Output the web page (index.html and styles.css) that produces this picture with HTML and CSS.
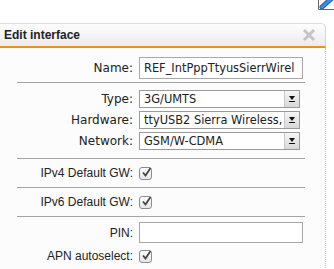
FILE: index.html
```html
<!DOCTYPE html>
<html>
<head>
<meta charset="utf-8">
<link rel="stylesheet" href="styles.css">
</head>
<body>
<div class="page">
  <div class="topbar">
    <svg class="tool-icon" width="16" height="11" viewBox="0 0 16 11">
      <path d="M0.5 0 V9.5 H16" fill="none" stroke="#666" stroke-width="1"/>
      <path d="M4 7 L13 -1" stroke="#1d5fa8" stroke-width="5" stroke-linecap="round"/>
      <path d="M4 7 L13 -1" stroke="#3b8fe0" stroke-width="3" stroke-linecap="round"/>
    </svg>
  </div>
  <div class="panel">
    <div class="head">
      <span class="title">Edit interface</span>
      <svg class="close" width="14" height="14" viewBox="0 0 14 14">
        <path d="M2 2 L12 12 M12 2 L2 12" stroke="#c4c4c4" stroke-width="3" stroke-linecap="butt"/>
      </svg>
    </div>
    <div class="body">
      <div class="sec sec-name">
        <div class="row">
          <span class="lbl lucida">Name:</span>
          <div class="input lucida field">REF_IntPppTtyusSierrWirel</div>
        </div>
      </div>
      <div class="sec sec-sel">
        <div class="row sel-row">
          <span class="lbl lucida">Type:</span>
          <div class="select lucida field"><span class="sel-text">3G/UMTS</span><span class="arrow"></span></div>
        </div>
        <div class="row sel-row">
          <span class="lbl lucida">Hardware:</span>
          <div class="select lucida field"><span class="sel-text">ttyUSB2 Sierra Wireless,</span><span class="arrow"></span></div>
        </div>
        <div class="row sel-row">
          <span class="lbl lucida">Network:</span>
          <div class="select lucida field"><span class="sel-text">GSM/W-CDMA</span><span class="arrow"></span></div>
        </div>
      </div>
      <div class="sec sec-chk">
        <div class="row">
          <span class="lbl">IPv4 Default GW:</span>
          <span class="chk"><svg width="13" height="13" viewBox="0 0 13 13"><path d="M3 6.5 L5.5 9.5 L10.5 2" fill="none" stroke="#444" stroke-width="1.8"/></svg></span>
        </div>
      </div>
      <div class="sec sec-chk">
        <div class="row">
          <span class="lbl">IPv6 Default GW:</span>
          <span class="chk"><svg width="13" height="13" viewBox="0 0 13 13"><path d="M3 6.5 L5.5 9.5 L10.5 2" fill="none" stroke="#444" stroke-width="1.8"/></svg></span>
        </div>
      </div>
      <div class="sec sec-last">
        <div class="row pin-row">
          <span class="lbl">PIN:</span>
          <div class="input pin"></div>
        </div>
        <div class="row apn-row">
          <span class="lbl">APN autoselect:</span>
          <span class="chk"><svg width="13" height="13" viewBox="0 0 13 13"><path d="M3 6.5 L5.5 9.5 L10.5 2" fill="none" stroke="#444" stroke-width="1.8"/></svg></span>
        </div>
      </div>
    </div>
  </div>
</div>
</body>
</html>
```

FILE: styles.css
```css
html, body {
  margin: 0;
  padding: 0;
  background: #ffffff;
}
body {
  font-family: "Liberation Sans", Arial, sans-serif;
  font-size: 12px;
  color: #222;
  overflow: hidden;
}
.page {
  width: 334px;
  height: 269px;
  overflow: hidden;
}
.topbar {
  height: 23px;
  display: flex;
  justify-content: flex-end;
}
.tool-icon {
  display: block;
  margin-right: 0;
}
.panel {
  width: 326px;
}
.head {
  height: 22px;
  display: flex;
  align-items: center;
  justify-content: space-between;
  padding: 0 9px 0 4px;
  border-top: 1px solid #dcdcdc;
  border-right: 1px solid #d6d6d6;
  border-top-right-radius: 5px;
  border-bottom: 2px solid #e8921c;
  background: linear-gradient(#fdfdfd, #ececec);
}
.title {
  font-weight: bold;
  font-size: 12px;
  color: #222;
}
.close {
  display: block;
}
.body {
  background: #fcfcfc;
  border-right: 1px dotted #c8c8c8;
  height: 230px;
  padding-top: 9px;
  box-sizing: border-box;
}
.sec {
  margin: 0 20px 0 17px;
  border-bottom: 1px solid #a4a4a4;
}
.sec-last {
  border-bottom: none;
}
.row {
  display: grid;
  grid-template-columns: 116px 1fr;
  column-gap: 6px;
  align-items: center;
}
.lbl {
  text-align: right;
  white-space: nowrap;
}
.lucida {
  font-family: "DejaVu Sans", sans-serif;
  font-size: 12px;
}
.lucida.field {
  font-size: 11.4px;
}
.input {
  width: 158px;
  height: 20px;
  border: 1px solid #a8a8a8;
  background: #fff;
  line-height: 20px;
  padding-left: 4px;
  box-sizing: content-box;
  white-space: nowrap;
  overflow: hidden;
}
.sec-name {
  padding-bottom: 3px;
}
.sec-sel {
  padding: 7px 0 8px;
  display: flex;
  flex-direction: column;
  gap: 3px;
}
.select {
  width: 159px;
  height: 16px;
  border: 1px solid #9a9a9a;
  background: #fff;
  display: flex;
  align-items: stretch;
}
.sel-text {
  flex: 1;
  padding-left: 4px;
  line-height: 16px;
  white-space: nowrap;
  overflow: hidden;
}
.arrow {
  width: 14px;
  flex: none;
  background: linear-gradient(#f6f6f6, #d8d8d8);
  border-left: 1px solid #c8c8c8;
  position: relative;
}
.arrow::before {
  content: "";
  position: absolute;
  left: 4px;
  top: 5px;
  border-left: 3px solid transparent;
  border-right: 3px solid transparent;
  border-top: 4px solid #111;
}
.arrow::after {
  content: "";
  position: absolute;
  left: 4px;
  top: 10px;
  width: 6px;
  height: 1px;
  background: #111;
}
.sec-chk .row {
  height: 28px;
}
.chk {
  width: 11px;
  height: 11px;
  border: 1px solid #8c8c8c;
  border-radius: 3px;
  background: linear-gradient(#ffffff, #e6e6e6);
  display: flex;
  align-items: center;
  justify-content: center;
  overflow: visible;
}
.chk svg {
  display: block;
  flex: none;
  margin-top: -2px;
  margin-left: 2px;
}
.pin-row {
  margin-top: 5px;
}
.pin {
  height: 19px;
}
.apn-row {
  margin-top: 6px;
}
```
